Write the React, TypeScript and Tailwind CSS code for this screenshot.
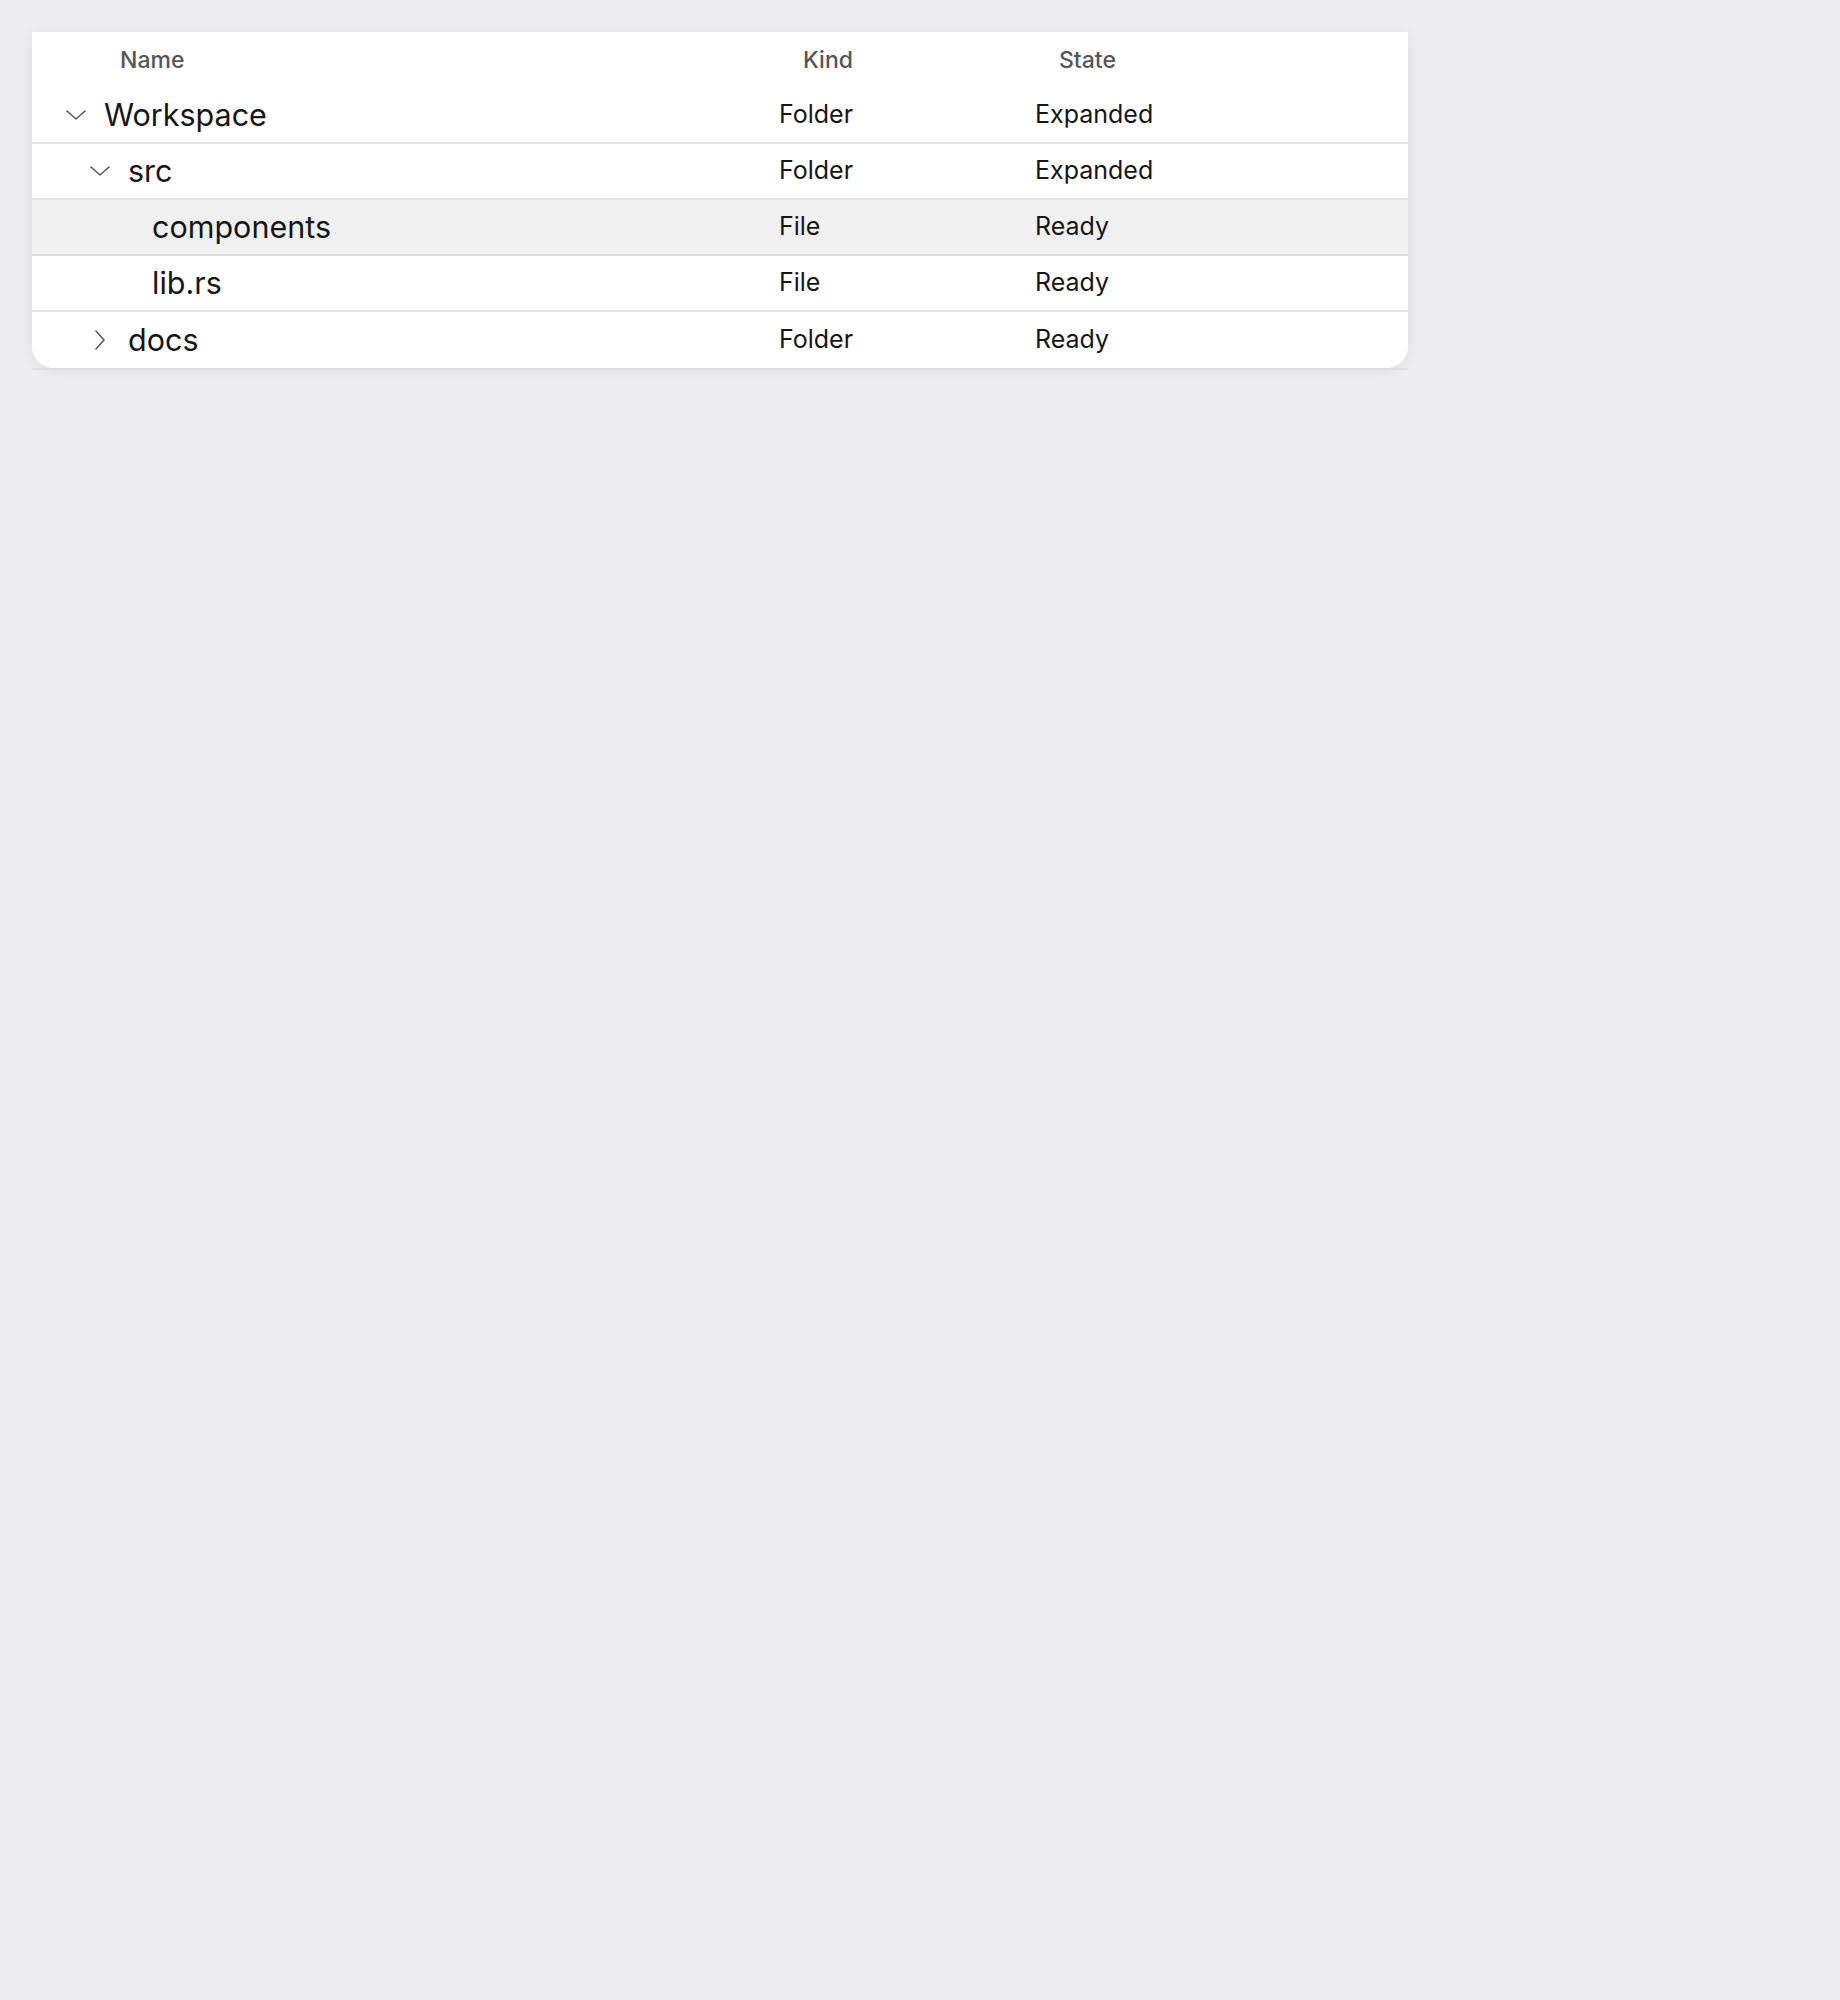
import React from 'react';

type Node = {
  name: string;
  kind: string;
  state: string;
  level: number;
  chevron?: 'down' | 'right';
  selected?: boolean;
};

const rows: Node[] = [
  { name: 'Workspace', kind: 'Folder', state: 'Expanded', level: 0, chevron: 'down' },
  { name: 'src', kind: 'Folder', state: 'Expanded', level: 1, chevron: 'down' },
  { name: 'components', kind: 'File', state: 'Ready', level: 2, selected: true },
  { name: 'lib.rs', kind: 'File', state: 'Ready', level: 2 },
  { name: 'docs', kind: 'Folder', state: 'Ready', level: 1, chevron: 'right' },
];

function Chevron({ dir }: { dir: 'down' | 'right' }) {
  if (dir === 'down') {
    return (
      <svg width="20" height="10" viewBox="0 0 20 10" fill="none">
        <polyline points="1,1 10,9 19,1" stroke="#5c5c63" strokeWidth="1.6" strokeLinecap="round" strokeLinejoin="round" />
      </svg>
    );
  }
  return (
    <svg width="10" height="20" viewBox="0 0 10 20" fill="none">
      <polyline points="1,1 9,10 1,19" stroke="#5c5c63" strokeWidth="1.6" strokeLinecap="round" strokeLinejoin="round" />
    </svg>
  );
}

export default function App() {
  return (
    <div className="min-h-[2000px] w-full bg-[#ededef] pt-8 pl-8" style={{ fontFamily: 'Inter, "Liberation Sans", sans-serif' }}>
      <div className="w-[1376px]">
        <div className="bg-white rounded-b-[22px] shadow-[0_2px_14px_rgba(0,0,0,0.07)]">
          {/* header */}
          <div className="grid grid-cols-[747px_256px_1fr] h-[56px] items-center text-[23px] font-medium text-[#55555c]">
            <div className="pl-[88px]">Name</div>
            <div className="pl-6">Kind</div>
            <div className="pl-6">State</div>
          </div>

          {rows.map((r, i) => {
            const last = i === rows.length - 1;
            return (
              <div
                key={r.name}
                className={
                  'grid grid-cols-[747px_256px_1fr] h-[56px] items-center ' +
                  (last ? 'rounded-b-[22px] ' : 'border-b-2 ') +
                  (r.selected ? 'bg-[#f0f0f0] border-[#dadadc]' : 'bg-white border-[#e4e4e6]')
                }
              >
                <div className="flex items-center pl-8">
                  <div style={{ width: r.level * 24 }} />
                  <div className="w-6 flex items-center justify-center">
                    {r.chevron && <Chevron dir={r.chevron} />}
                  </div>
                  <span className="ml-4 text-[30.5px] text-[#161616]">{r.name}</span>
                </div>
                <div className="text-[25px] text-[#161616]">{r.kind}</div>
                <div className="text-[25px] text-[#161616]">{r.state}</div>
              </div>
            );
          })}
        </div>
        <div className="h-[2px] bg-[#dfdfe1]" />
      </div>
    </div>
  );
}
